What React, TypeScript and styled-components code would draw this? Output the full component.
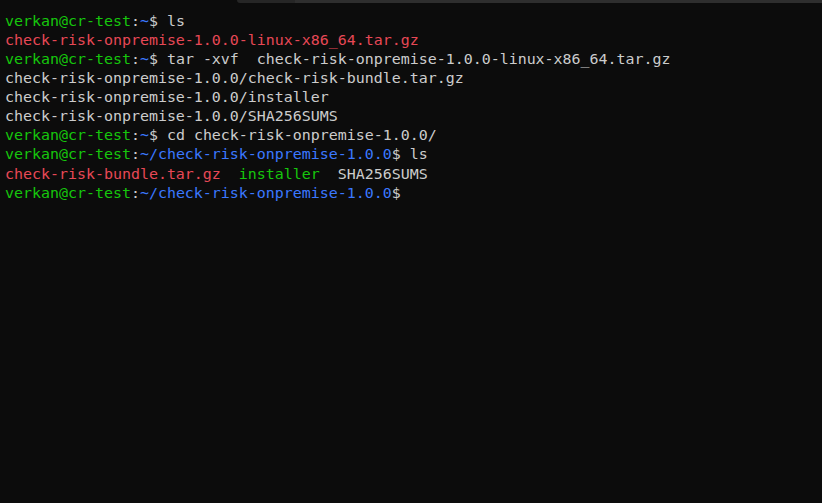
import React from "react";
import styled, { createGlobalStyle } from "styled-components";

const Global = createGlobalStyle`
  html, body { margin: 0; padding: 0; background: #0c0c0c; }
  #root { height: 503px; }
`;

const Window = styled.div`
  width: 822px;
  height: 503px;
  background: #0c0c0c;
  display: flex;
  flex-direction: column;
  overflow: hidden;
`;

const TopStrip = styled.div`
  height: 3px;
  display: flex;
  flex-shrink: 0;
`;

const StripGap = styled.div`
  width: 237px;
`;

const StripTab = styled.div`
  width: 58px;
  background: #262626;
  border-bottom-left-radius: 3px;
`;

const StripRest = styled.div`
  flex: 1;
  background: #2e2e2e;
`;

const Screen = styled.pre`
  margin: 0;
  padding: 8.5px 5px 0 5px;
  font-family: "DejaVu Sans Mono", "Liberation Mono", monospace;
  font-size: 14.94px;
  line-height: 19.15px;
  color: #cccccc;
  white-space: pre;
`;

const Line = styled.div`
  height: 19.15px;
`;

type Tone = "user" | "path" | "red" | "exec" | "plain";

const colors: Record<Tone, string> = {
  user: "#16c60c",
  path: "#3b78ff",
  red: "#e74856",
  exec: "#16c60c",
  plain: "#cccccc",
};

const Seg = styled.span<{ $tone: Tone }>`
  color: ${(p) => colors[p.$tone]};
`;

const Prompt = ({ path, cmd }: { path: string; cmd?: string }) => (
  <Line>
    <Seg $tone="user">verkan@cr-test</Seg>
    <Seg $tone="plain">:</Seg>
    <Seg $tone="path">{path}</Seg>
    <Seg $tone="plain">$ {cmd ?? ""}</Seg>
  </Line>
);

export default function App() {
  return (
    <>
      <Global />
      <Window>
        <TopStrip>
          <StripGap />
          <StripTab />
          <StripRest />
        </TopStrip>
        <Screen>
          <Prompt path="~" cmd="ls" />
          <Line>
            <Seg $tone="red">check-risk-onpremise-1.0.0-linux-x86_64.tar.gz</Seg>
          </Line>
          <Prompt path="~" cmd="tar -xvf  check-risk-onpremise-1.0.0-linux-x86_64.tar.gz" />
          <Line>check-risk-onpremise-1.0.0/check-risk-bundle.tar.gz</Line>
          <Line>check-risk-onpremise-1.0.0/installer</Line>
          <Line>check-risk-onpremise-1.0.0/SHA256SUMS</Line>
          <Prompt path="~" cmd="cd check-risk-onpremise-1.0.0/" />
          <Prompt path="~/check-risk-onpremise-1.0.0" cmd="ls" />
          <Line>
            <Seg $tone="red">check-risk-bundle.tar.gz</Seg>
            {"  "}
            <Seg $tone="exec">installer</Seg>
            {"  SHA256SUMS"}
          </Line>
          <Prompt path="~/check-risk-onpremise-1.0.0" />
        </Screen>
      </Window>
    </>
  );
}
